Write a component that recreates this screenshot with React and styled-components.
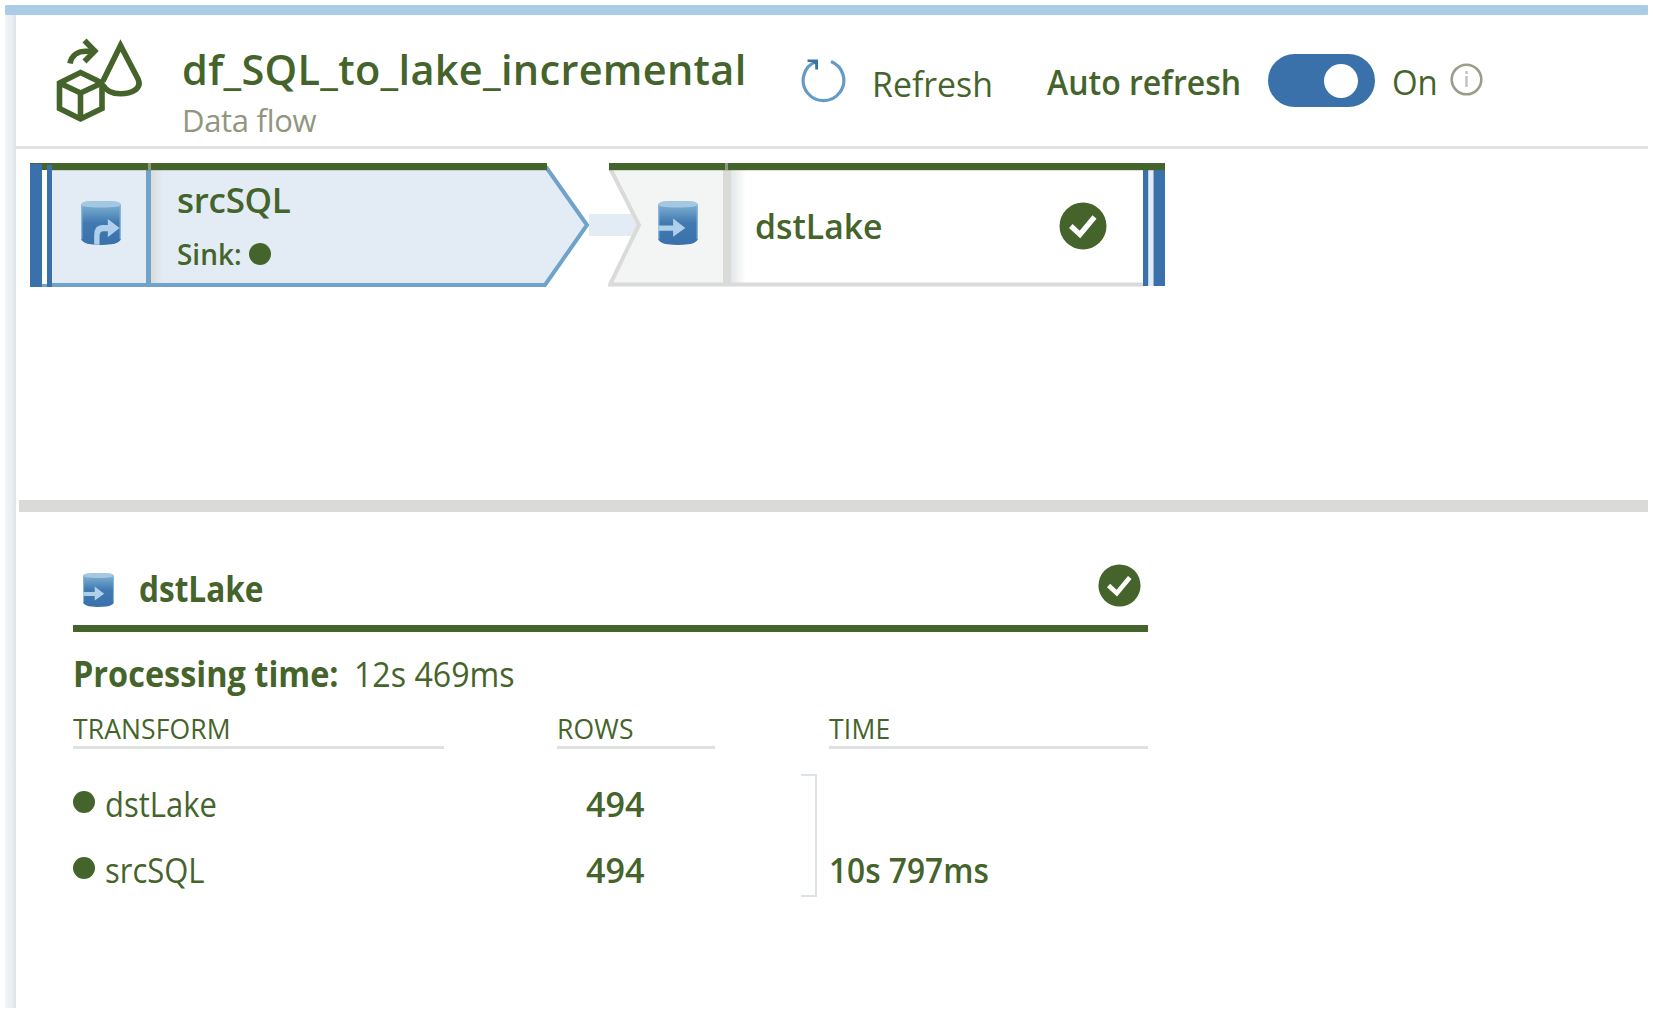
import React from "react";
import styled, { createGlobalStyle } from "styled-components";

const c = {
  green: "#45642b",
  blue: "#3a71ab",
  mid: "#6fa3c9",
  light: "#abcce6",
  pale: "#e3ecf5",
  grey: "#dadbd9",
  muted: "#92967f",
};

const Global = createGlobalStyle`
  * { box-sizing: border-box; }
  body { margin: 0; background: #fff; overflow: hidden; }
`;

const Page = styled.div`
  width: 1653px;
  height: 1013px;
  padding: 5px;
  display: flex;
  flex-direction: column;
  background: #fff;
  color: ${c.green};
  font-family: "Open Sans", "Noto Sans", sans-serif;
`;
const TopBar = styled.div`
  height: 10px;
  flex: none;
  background: ${c.light};
  border-radius: 1px;
`;
const Body = styled.div`
  flex: 1;
  display: flex;
  min-height: 0;
`;
const Gutter = styled.div`
  width: 11px;
  flex: none;
  background: linear-gradient(90deg, #f2f6fa, #e9eef3 60%, #dce4ea);
`;
const Main = styled.main`
  flex: 1;
  min-width: 0;
  display: flex;
  flex-direction: column;
`;
const Label = styled.span`
  display: block;
  font-size: ${(p) => p.$size}px;
  font-weight: ${(p) => p.$weight || 400};
  letter-spacing: ${(p) => p.$track || 0}px;
  color: ${(p) => p.$color || "inherit"};
  line-height: 1;
  white-space: nowrap;
  transform: scaleX(${(p) => p.$squeeze || 1});
  transform-origin: 0 50%;
`;

const Header = styled.header`
  height: 134px;
  flex: none;
  display: flex;
  align-items: flex-start;
  padding-left: 1px;
  border-bottom: 3px solid #dfe3e3;
`;
const FlowIcon = styled.svg`
  flex: none;
  width: 90px;
  height: 90px;
  margin: 21px 0 0 37px;
`;
const Titles = styled.div`
  width: 618px;
  margin: 34px 0 0 38px;
  display: flex;
  flex-direction: column;
  gap: 14px;
`;
const Command = styled.div`
  display: flex;
  align-items: flex-start;
  width: 247px;
`;
const RefreshIcon = styled.svg`
  width: 48px;
  height: 48px;
  margin: 41px 24px 0 0;
  flex: none;
`;
const Drop = styled.div`
  padding-top: ${(p) => p.$y}px;
`;
const AutoRefresh = styled.div`
  display: flex;
  align-items: flex-start;
`;
const AutoLabel = styled.div`
  width: 221px;
  padding-top: 49px;
`;
const Switch = styled.div`
  width: 107px;
  height: 53px;
  margin: 39px 17px 0 0;
  padding: 0 17px 0 0;
  display: flex;
  align-items: center;
  justify-content: flex-end;
  border-radius: 27px;
  background: ${c.blue};
`;
const Knob = styled.div`
  width: 34px;
  height: 34px;
  border-radius: 50%;
  background: #fff;
`;
const OnLabel = styled.div`
  width: 58px;
  padding-top: 49px;
`;
const InfoIcon = styled.svg`
  width: 34px;
  height: 34px;
  margin-top: 48px;
`;

const Canvas = styled.section`
  height: 351px;
  flex: none;
  display: flex;
  align-items: flex-start;
  padding: 14px 0 0 14px;
`;
const SourceNode = styled.div`
  position: relative;
  width: 560px;
  height: 124px;
  display: flex;
`;
const SinkNode = styled(SourceNode)`
  width: 558px;
`;
const Outline = styled.svg`
  position: absolute;
  inset: 0;
  width: 100%;
  height: 100%;
`;
const IconCell = styled.div`
  position: relative;
  width: ${(p) => p.$w}px;
  padding: 38px 0 0 ${(p) => p.$x}px;
`;
const NodeText = styled.div`
  position: relative;
  flex: 1;
  padding: ${(p) => p.$y}px 0 0 ${(p) => p.$x}px;
`;
const SinkLine = styled.div`
  display: flex;
  align-items: center;
  gap: 6px;
  margin-top: 23px;
`;
const Dot = styled.i`
  flex: none;
  width: 22px;
  height: 22px;
  border-radius: 50%;
  background: ${c.green};
`;
const Connector = styled.div`
  width: 49px;
  height: 22px;
  margin: 51px -30px 0 -1px;
  background: ${c.pale};
`;
const NodeStatus = styled.div`
  position: relative;
  width: 107px;
  padding-top: 39px;
`;

const Splitter = styled.div`
  height: 12px;
  flex: none;
  margin-left: 3px;
  background: ${c.grey};
`;
const Details = styled.section`
  width: 1075px;
  margin-left: 57px;
  padding-top: 52px;
`;
const DetailHead = styled.div`
  height: 68px;
  display: flex;
  align-items: flex-start;
  padding-left: 10px;
  border-bottom: 7px solid ${c.green};
`;
const DetailName = styled.div`
  flex: 1;
  padding: 7px 0 0 25px;
`;
const DetailStatus = styled.div`
  margin-right: 7px;
`;
const Timing = styled.div`
  display: grid;
  grid-template-columns: 281px 1fr;
  padding-top: 24px;
`;
const TableGrid = styled.div`
  display: grid;
  grid-template-columns: 371px 113px 158px 114px 319px;
`;
const HeadRow = styled(TableGrid)`
  margin-top: 24px;
`;
const HeadCell = styled.div`
  grid-column: ${(p) => p.$col};
  height: 33px;
  border-bottom: 3px solid #e0e2e1;
`;
const Rows = styled.div`
  display: grid;
  grid-template-columns: 513px 215px 16px 1fr;
  margin-top: 25px;
  height: 123px;
`;
const Column = styled.div`
  display: flex;
  flex-direction: column;
  gap: 31px;
  padding-top: 12px;
`;
const NameRow = styled.div`
  display: flex;
  gap: 10px;
  align-items: flex-start;
`;
const RowDot = styled(Dot)`
  margin-top: 5px;
`;
const Bracket = styled.div`
  border: 2px solid #dce3e7;
  border-left: 0;
`;
const Total = styled.div`
  padding: 78px 0 0 12px;
`;
const Picture = styled.svg`
  display: block;
`;

const CheckIcon = ({ size }) => (
  <Picture width={size} height={size} viewBox="0 0 48 48">
    <circle cx="24" cy="24" r="23.5" fill={c.green} />
    <path d="M11.8 24 L21 32.5 L35.5 15" fill="none" stroke="#fff" strokeWidth="5.2" />
  </Picture>
);

const Database = ({ w, h, id, source }) => (
  <Picture width={w} height={h} viewBox="0 0 41 45" preserveAspectRatio="none">
    <defs>
      <linearGradient id={id} x1="0" y1="0" x2="0" y2="1">
        <stop offset="0" stopColor="#82b0d4" />
        <stop offset=".18" stopColor="#6fa3c9" />
        <stop offset=".5" stopColor="#4179b1" />
        <stop offset="1" stopColor="#3a71ab" />
      </linearGradient>
    </defs>
    <path d="M0 4 Q1 1 7 0.6 Q20 -0.6 34 0.6 Q40 1 41 4 V39 Q39 43 31 44.3 Q20 45.6 10 44.3 Q2 43 0 39 Z" fill={`url(#${id})`} />
    <path d="M0 4 Q1 1 7 0.6 Q20 -0.6 34 0.6 Q40 1 41 4 Q39 6 30 6.4 Q20 6.9 11 6.4 Q2 6 0 4Z" fill="#a5c8e2" />
    <path d="M0.7 5 V39 M40.3 5 V39" stroke="#8cb6d8" strokeWidth="1.4" />
    {source ? (
      <path d="M13.5 44.5 V35 Q13.5 24.5 22 24.5 H27.5 V18.5 L39.5 27.5 L27.5 37 V31 H23 Q19 31 19 36 V44.8 Z" fill="#afd0ea" />
    ) : (
      <path d="M0.5 25 H15.5 V18 L28 27.5 L15.5 36.5 V30.5 H0.5 Z" fill="#afd0ea" />
    )}
  </Picture>
);

export default function App() {
  return (
    <>
      <Global />
      <Page>
        <TopBar />
        <Body>
          <Gutter />
          <Main>
            <Header>
              <FlowIcon viewBox="54 36 90 90" fill="none" stroke={c.green} strokeWidth="5.6">
                <path d="M80.5 72.5 L102 83 V108.5 L80.5 119 L59.5 108.5 V83 Z" />
                <path d="M59.5 83 L80.5 93 L102 83 M80.5 93 V119" />
                <path d="M70 63.5 C71.5 55 78 51.2 86 51.2 H92" />
                <path d="M84.5 40.5 L94.8 51 L84.5 61.5" />
                <path d="M90 45 L98 51 L90 57 Z" fill={c.green} stroke="none" />
                <path d="M103 81 L120.5 45.5 L138 79 C142.5 89 131 93.8 120.5 93.8 C113 93.8 106.5 91.5 103 85" />
              </FlowIcon>
              <Titles>
                <Label $size={41.5} $weight={600} $track={0.3}>df_SQL_to_lake_incremental</Label>
                <Label $size={31} $track={-0.3} $color={c.muted}>Data flow</Label>
              </Titles>
              <Command>
                <RefreshIcon viewBox="800 56 48 48" fill="none" stroke="#649bc6" strokeWidth="3.2">
                  <path d="M831 61.5 A20.3 20.3 0 1 1 816 61.5" />
                  <path d="M807.5 59.5 H818 V69.5 H815.2 V64.5 L812 62 H807.5 Z" fill={c.blue} stroke="none" />
                </RefreshIcon>
                <Drop $y={51}>
                  <Label $size={35.5} $squeeze={0.953}>Refresh</Label>
                </Drop>
              </Command>
              <AutoRefresh>
                <AutoLabel>
                  <Label $size={35} $weight={600} $squeeze={0.915}>Auto refresh</Label>
                </AutoLabel>
                <Switch><Knob /></Switch>
                <OnLabel>
                  <Label $size={35} $squeeze={0.94}>On</Label>
                </OnLabel>
                <InfoIcon viewBox="0 0 34 34" fill="none" stroke="#9a9d8c" strokeWidth="2.6">
                  <circle cx="16.5" cy="16.5" r="14.8" />
                  <path d="M16.5 13 V24 M16.5 8 V11" stroke="#c3c7c4" />
                </InfoIcon>
              </AutoRefresh>
            </Header>

            <Canvas>
              <SourceNode>
                <Outline viewBox="30 163 560 124">
                  <defs>
                    <linearGradient id="shadeSource">
                      <stop offset="0" stopColor="#d9dcda" />
                      <stop offset="1" stopColor={c.pale} />
                    </linearGradient>
                  </defs>
                  <path d="M52 168 H547 L588 225 L545 285 H52 Z" fill={c.pale} />
                  <rect x="151" y="170" width="12" height="113" fill="url(#shadeSource)" />
                  <path d="M546 167 L587 225 L545 285 H42" fill="none" stroke={c.mid} strokeWidth="4" />
                  <rect x="146" y="169" width="5" height="116" fill={c.mid} />
                  <rect x="30" y="163" width="517" height="7.2" fill={c.green} />
                  <rect x="148" y="163" width="3" height="7" fill={c.muted} />
                  <rect x="30" y="164" width="12" height="123" fill={c.blue} />
                  <rect x="42" y="170" width="6" height="114" fill="#fff" />
                  <rect x="47" y="165" width="5" height="122" fill={c.blue} />
                </Outline>
                <IconCell $w={121} $x={51}><Database w={40} h={44} id="dbSource" source /></IconCell>
                <NodeText $x={26} $y={19}>
                  <Label $size={35} $weight={600} $track={-0.3}>srcSQL</Label>
                  <SinkLine>
                    <Label $size={28.5} $weight={600} $squeeze={0.98}>Sink:</Label>
                    <Dot />
                  </SinkLine>
                </NodeText>
              </SourceNode>
              <Connector />
              <SinkNode>
                <Outline viewBox="608 163 558 124">
                  <defs>
                    <linearGradient id="shadeSink">
                      <stop offset="0" stopColor="#e3e7e9" />
                      <stop offset="1" stopColor="#fff" />
                    </linearGradient>
                  </defs>
                  <path d="M610 168 L640 225 L610 285 H727 V168 Z" fill="#f3f4f4" />
                  <path d="M727 168 H1145 V285 H727 Z" fill="#fff" />
                  <rect x="731" y="170" width="15" height="113" fill="url(#shadeSink)" />
                  <path d="M610 168 L639 225 L610 284.5 H1145" fill="none" stroke={c.grey} strokeWidth="4" />
                  <rect x="723" y="169" width="8" height="117" fill={c.grey} />
                  <rect x="1143" y="170" width="5.5" height="116" fill={c.blue} />
                  <rect x="1148.5" y="170" width="5" height="116" fill={c.pale} />
                  <rect x="1153.5" y="170" width="11.5" height="116" fill={c.blue} />
                  <rect x="609" y="163" width="556" height="7.2" fill={c.green} />
                  <rect x="725" y="163" width="3" height="7" fill={c.muted} />
                </Outline>
                <IconCell $w={123} $x={50}><Database w={40} h={44} id="dbSink" /></IconCell>
                <NodeText $x={24} $y={45}>
                  <Label $size={35} $weight={600} $squeeze={0.965}>dstLake</Label>
                </NodeText>
                <NodeStatus><CheckIcon size={48} /></NodeStatus>
              </SinkNode>
            </Canvas>

            <Splitter />

            <Details>
              <DetailHead>
                <Drop $y={9}><Database w={31} h={34} id="dbDetail" /></Drop>
                <DetailName>
                  <Label $size={35} $weight={700} $squeeze={0.902}>dstLake</Label>
                </DetailName>
                <DetailStatus><CheckIcon size={43} /></DetailStatus>
              </DetailHead>
              <Timing>
                <Label $size={35.5} $weight={700} $squeeze={0.914}>Processing time:</Label>
                <Label $size={35.5} $squeeze={0.905}>12s 469ms</Label>
              </Timing>
              <HeadRow>
                <HeadCell $col={1}><Label $size={26.5} $track={0.1}>TRANSFORM</Label></HeadCell>
                <HeadCell $col={3}><Label $size={26.5} $track={0.2}>ROWS</Label></HeadCell>
                <HeadCell $col={5}><Label $size={26.5} $track={0.2}>TIME</Label></HeadCell>
              </HeadRow>
              <Rows>
                <Column>
                  {["dstLake", "srcSQL"].map((name) => (
                    <NameRow key={name}>
                      <RowDot />
                      <Label $size={35} $squeeze={0.885}>{name}</Label>
                    </NameRow>
                  ))}
                </Column>
                <Column>
                  {["dstLake", "srcSQL"].map((name) => (
                    <Label key={name} $size={35} $weight={600} $squeeze={0.975}>494</Label>
                  ))}
                </Column>
                <Bracket />
                <Total>
                  <Label $size={35} $weight={600} $squeeze={0.905}>10s 797ms</Label>
                </Total>
              </Rows>
            </Details>
          </Main>
        </Body>
      </Page>
    </>
  );
}
